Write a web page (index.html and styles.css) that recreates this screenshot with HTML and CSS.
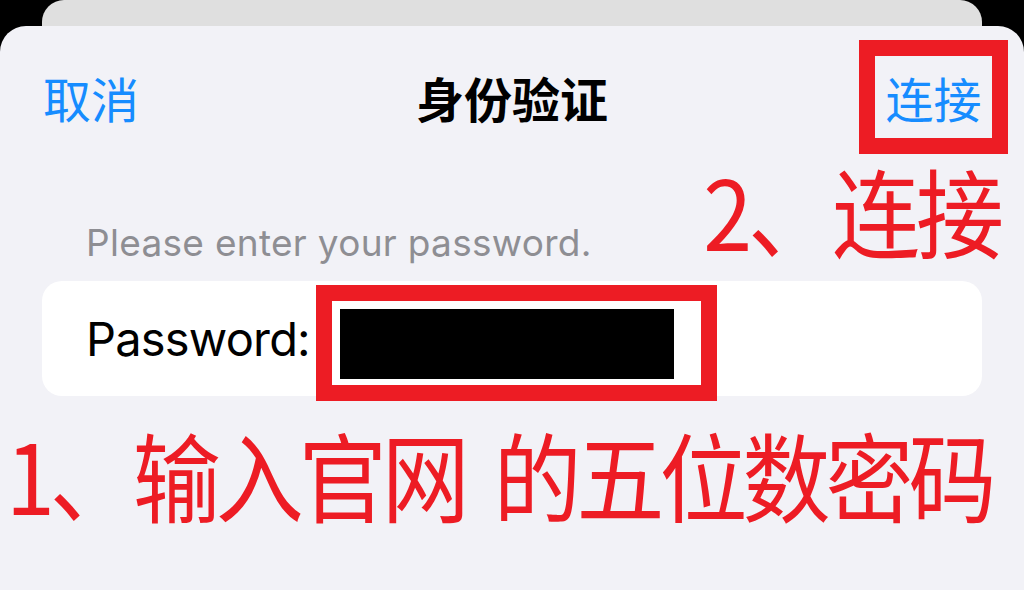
FILE: index.html
```html
<!DOCTYPE html>
<html>
   <head>
      <meta charset = "UTF-8">
      <meta name = "Viewport" content = "width=device-width, initial-scale=1.0">
      <title>身份验证</title>
      <link rel="stylesheet" href="styles.css">
   </head>
   <body>
      <div class = "back-card"></div>
      <div class = "sheet">
         <div class = "nav">
            <div class = "nav-left">
               <button class = "nav-button">取消</button>
            </div>
            <div class = "nav-title">身份验证</div>
            <div class = "nav-right">
               <div class = "mark mark-connect">
                  <button class = "nav-button">连接</button>
               </div>
            </div>
         </div>
         <div class = "hint-row">
            <div class = "hint">Please enter your password.</div>
            <div class = "note note-step2">2、连接</div>
         </div>
         <div class = "field-card">
            <span class = "field-label">Password:</span>
            <div class = "mark mark-field">
               <div class = "redacted"></div>
            </div>
         </div>
         <div class = "note note-step1">1、输入官网 的五位数密码</div>
      </div>
   </body>
</html>
```

FILE: styles.css
```css
body {
   margin: 0;
   background-color: black;
   font-family: Inter, "Noto Sans", "Noto Sans CJK SC", sans-serif;
   overflow: hidden;
}
.back-card {
   height: 26px;
   margin-left: 42px;
   margin-right: 42px;
   background-color: #dfdfdf;
   border-radius: 22px 22px 0 0;
}
.sheet {
   height: 564px;
   background-color: #f2f2f7;
   border-radius: 26px 26px 0 0;
   padding-top: 14px;
   box-sizing: border-box;
}
.nav {
   display: grid;
   grid-template-columns: 1fr auto 1fr;
   align-items: center;
   height: 114px;
}
.nav-left {
   padding-left: 43px;
}
.nav-right {
   display: flex;
   justify-content: flex-end;
   padding-right: 16px;
}
.nav-button {
   border: none;
   background: none;
   padding: 0;
   color: #168cff;
   font-family: "Noto Sans CJK SC", sans-serif;
   font-size: 48px;
   line-height: 1;
}
.nav-title {
   font-family: "Noto Sans CJK SC", sans-serif;
   font-size: 48px;
   font-weight: 700;
   line-height: 1;
   color: black;
}
.mark {
   border: 16px solid #ed1c24;
   box-sizing: border-box;
}
.mark-connect {
   width: 149px;
   height: 114px;
   display: flex;
   justify-content: center;
   align-items: center;
}
.hint-row {
   display: flex;
   justify-content: space-between;
   align-items: baseline;
   padding-left: 86px;
   padding-right: 24px;
   height: 127px;
}
.hint {
   font-size: 37px;
   letter-spacing: 0.3px;
   color: #8e8e93;
}
.note {
   font-family: "Noto Sans CJK SC", sans-serif;
   color: #ed1c24;
   line-height: 1;
}
.note-step2 {
   font-size: 88px;
   letter-spacing: -4px;
   padding-top: 20px;
   transform: scaleY(1.1) translateY(-4px);
   transform-origin: bottom;
}
.field-card {
   display: flex;
   align-items: flex-start;
   height: 115px;
   margin-left: 42px;
   margin-right: 42px;
   background-color: white;
   border-radius: 20px;
}
.field-label {
   margin-left: 44px;
   margin-top: 29px;
   font-size: 47px;
   letter-spacing: -0.8px;
   color: black;
}
.mark-field {
   width: 401px;
   height: 116px;
   margin-left: 6px;
   margin-top: 4px;
   padding: 8px 27px 6px 8px;
   background-color: white;
}
.redacted {
   height: 100%;
   background-color: black;
}
.note-step1 {
   margin-top: 29px;
   padding-left: 6px;
   font-size: 88px;
   letter-spacing: -5px;
   word-spacing: 14px;
   transform: scaleY(1.1);
   transform-origin: top;
}
```
